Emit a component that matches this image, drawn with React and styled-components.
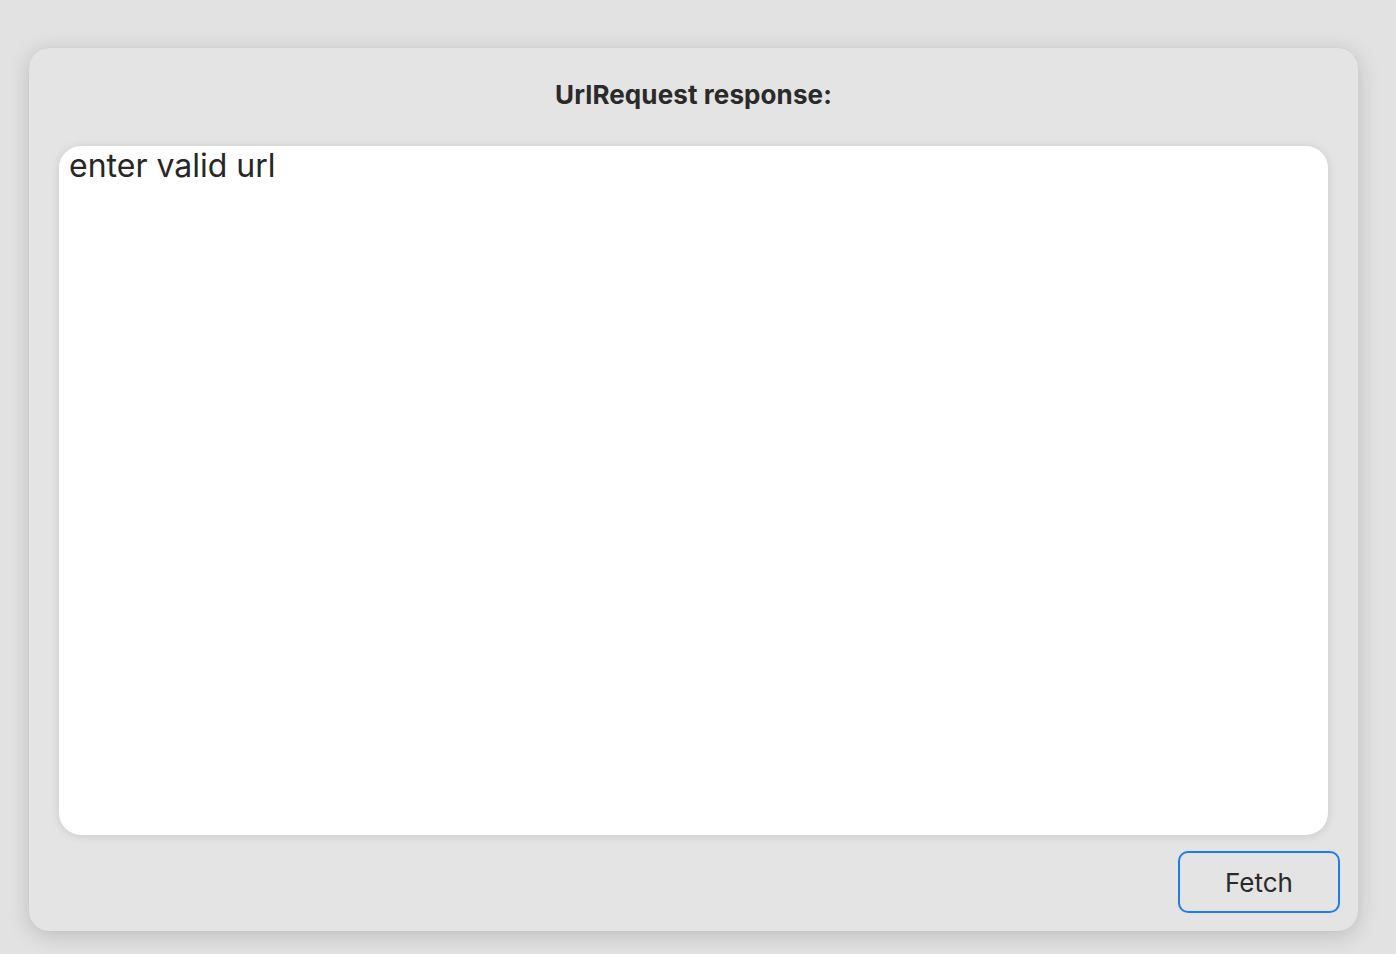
import styled, { createGlobalStyle } from 'styled-components';

const GlobalStyle = createGlobalStyle`
    html, body {
        margin: 0;
        padding: 0;
        background: #e2e2e2;
        font-family: Inter, "Liberation Sans", sans-serif;
    }
`;

const Page = styled.div`
    width: 1396px;
    height: 954px;
    box-sizing: border-box;
    padding: 48px 38px 23px 29px;
    display: flex;
`;

const Card = styled.div`
    flex: 1;
    display: flex;
    flex-direction: column;
    background: #e4e4e4;
    border-radius: 20px;
    box-shadow: 0 4px 22px rgba(0, 0, 0, 0.17), 0 0 1px rgba(0, 0, 0, 0.1);
    padding: 0 18px 18px 30px;
`;

const Title = styled.h2`
    margin: 0;
    height: 98px;
    box-sizing: border-box;
    padding-top: 31px;
    padding-right: 12px;
    text-align: center;
    font-size: 26px;
    font-weight: 700;
    color: #2a2a2a;
    letter-spacing: 0.1px;
`;

const Response = styled.div`
    flex: 1;
    margin-right: 12px;
    background: #ffffff;
    border-radius: 22px;
    box-shadow: 0 1px 10px rgba(0, 0, 0, 0.12);
    padding: 0 10px;
    font-size: 32px;
    line-height: 40px;
    color: #262626;
`;

const Footer = styled.div`
    display: flex;
    justify-content: flex-end;
    padding-top: 16px;
`;

const Button = styled.button`
    width: 162px;
    height: 62px;
    border: 2.5px solid #1c7cf4;
    border-radius: 10px;
    background: #e4e4e4;
    font-family: inherit;
    font-size: 26px;
    color: #2a2a2a;
    cursor: pointer;
`;

const App = () => (
    <>
        <GlobalStyle />
        <Page>
            <Card>
                <Title>UrlRequest response:</Title>
                <Response>enter valid url</Response>
                <Footer>
                    <Button>Fetch</Button>
                </Footer>
            </Card>
        </Page>
    </>
);

export default App;
